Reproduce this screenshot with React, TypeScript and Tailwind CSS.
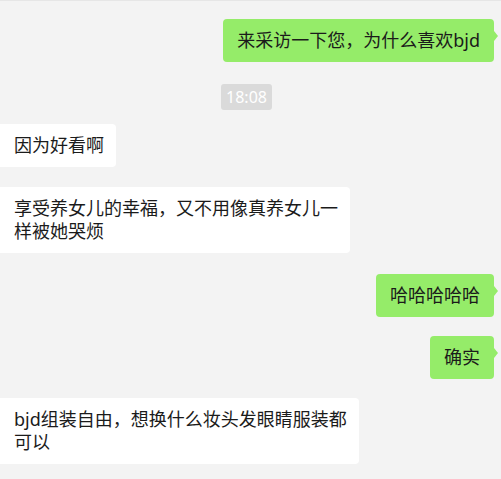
const FONT = "font-['Noto_Sans','Noto_Sans_CJK_SC',sans-serif]"

type Msg =
  | { kind: 'me'; lines: string[]; mt: string }
  | { kind: 'them'; lines: string[]; mt: string }
  | { kind: 'time'; lines: string[]; mt: string }

const messages: Msg[] = [
  { kind: 'me', lines: ['来采访一下您，为什么喜欢bjd'], mt: 'mt-[18px]' },
  { kind: 'time', lines: ['18:08'], mt: 'mt-[22px]' },
  { kind: 'them', lines: ['因为好看啊'], mt: 'mt-[14px]' },
  { kind: 'them', lines: ['享受养女儿的幸福，又不用像真养女儿一', '样被她哭烦'], mt: 'mt-[20px]' },
  { kind: 'me', lines: ['哈哈哈哈哈'], mt: 'mt-[21px]' },
  { kind: 'me', lines: ['确实'], mt: 'mt-[19px]' },
  { kind: 'them', lines: ['bjd组装自由，想换什么妆头发眼睛服装都', '可以'], mt: 'mt-[19px]' },
]

function MyBubble({ lines }: { lines: string[] }) {
  return (
    <div className="flex justify-end pr-[7px]">
      <div className="relative rounded-[4px] bg-[#95ec69] px-[14px] py-[10px] text-[18px] leading-[23px] text-[#1b1b1b]">
        {lines.map((l, i) => (
          <div key={i} className="whitespace-nowrap">{l}</div>
        ))}
        <span className="absolute right-[-4px] top-[12px] h-0 w-0 border-y-[5px] border-l-[4px] border-y-transparent border-l-[#95ec69]" />
      </div>
    </div>
  )
}

function TheirBubble({ lines }: { lines: string[] }) {
  return (
    <div className="flex justify-start">
      <div className="rounded-r-[4px] bg-white pl-[14px] pr-[12px] py-[10px] text-[18px] leading-[23px] text-[#1b1b1b]">
        {lines.map((l, i) => (
          <div key={i} className="whitespace-nowrap">{l}</div>
        ))}
      </div>
    </div>
  )
}

export default function App() {
  return (
    <div className={`h-[479px] w-[501px] overflow-hidden border-t border-[#e6e6e6] bg-[#f3f3f3] ${FONT}`}>
      <div className="flex flex-col">
        {messages.map((m, i) => (
          <div key={i} className={m.mt}>
            {m.kind === 'me' && <MyBubble lines={m.lines} />}
            {m.kind === 'them' && <TheirBubble lines={m.lines} />}
            {m.kind === 'time' && (
              <div className="flex justify-center pr-[8px]">
                <span className="rounded-[3px] bg-[#dadada] px-[5px] text-[16px] leading-[26px] text-white">
                  {m.lines[0]}
                </span>
              </div>
            )}
          </div>
        ))}
      </div>
    </div>
  )
}
